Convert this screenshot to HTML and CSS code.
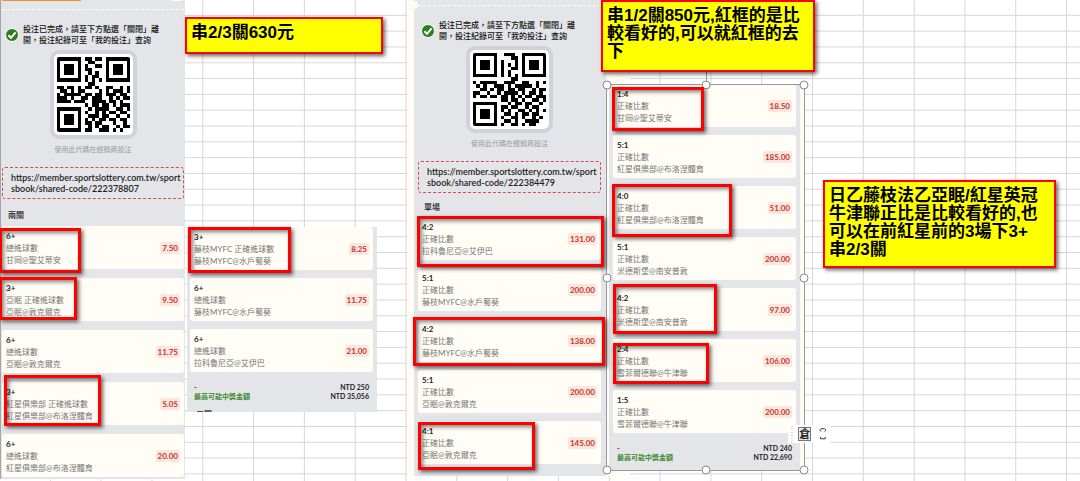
FILE: index.html
```html
<!DOCTYPE html>
<html lang="zh-TW">
<head>
  <meta charset="utf-8">
  <title>串關</title>
  <link rel="stylesheet" href="styles.css">
</head>
<body>
  <main class="sheet">

    <section class="slip slip-a">
      <div class="slip-top"><span class="tab-line"></span><span class="dot"></span></div>
      <div class="notice">
        <svg class="check" viewBox="0 0 14 14"><circle cx="7" cy="7" r="6.5" fill="#2f7d22" stroke="#fff" /><path d="M3.4 7.2 L6 9.8 L10.6 4.4" fill="none" stroke="#fff" stroke-width="2" /></svg>
        <p>投注已完成，請至下方點選「關閉」離<br>開，投注紀錄可至「我的投注」查詢</p>
      </div>
      <svg class="qr" id="qrA" viewBox="0 0 21 21" preserveAspectRatio="none" shape-rendering="crispEdges"></svg>
      <p class="caption">使用此代碼在經銷商投注</p>
      <a class="link-box" href="https://member.sportslottery.com.tw/sportsbook/shared-code/222378807">https://member.sportslottery.com.tw/sport<br>sbook/shared-code/222378807</a>
      <h2 class="play">兩關</h2>
      <div class="bets">
        <article class="bet"><div><h3>6+</h3><p>總進球數</p><p>甘岡@聖艾蒂安</p></div><span class="odds">7.50</span></article>
        <article class="bet"><div><h3>3+</h3><p>亞眠 正確進球數</p><p>亞眠@敦克爾克</p></div><span class="odds">9.50</span></article>
        <article class="bet"><div><h3>6+</h3><p>總進球數</p><p>亞眠@敦克爾克</p></div><span class="odds">11.75</span></article>
        <article class="bet"><div><h3>3+</h3><p>紅星俱樂部 正確進球數</p><p>紅星俱樂部@布洛涅體育</p></div><span class="odds">5.05</span></article>
        <article class="bet"><div><h3>6+</h3><p>總進球數</p><p>紅星俱樂部@布洛涅體育</p></div><span class="odds">20.00</span></article>
      </div>
    </section>

    <section class="slip slip-b">
      <div class="bets">
        <article class="bet"><div><h3>3+</h3><p>藤枝MYFC 正確進球數</p><p>藤枝MYFC@水戶蜀葵</p></div><span class="odds">8.25</span></article>
        <article class="bet"><div><h3>6+</h3><p>總進球數</p><p>藤枝MYFC@水戶蜀葵</p></div><span class="odds">11.75</span></article>
        <article class="bet"><div><h3>6+</h3><p>總進球數</p><p>拉科魯尼亞@艾伊巴</p></div><span class="odds">21.00</span></article>
      </div>
      <div class="totals">
        <p><span>-</span><span>NTD 250</span></p>
        <p><span class="win">最高可能中獎金額</span><span>NTD 35,056</span></p>
      </div>
      <h2 class="play">三關</h2>
    </section>

    <section class="slip slip-c">
      <div class="slip-top"></div>
      <div class="notice">
        <svg class="check" viewBox="0 0 14 14"><circle cx="7" cy="7" r="6.5" fill="#2f7d22" stroke="#fff" /><path d="M3.4 7.2 L6 9.8 L10.6 4.4" fill="none" stroke="#fff" stroke-width="2" /></svg>
        <p>投注已完成，請至下方點選「關閉」離<br>開，投注紀錄可至「我的投注」查詢</p>
      </div>
      <svg class="qr" id="qrC" viewBox="0 0 21 21" preserveAspectRatio="none" shape-rendering="crispEdges"></svg>
      <p class="caption">使用此代碼在經銷商投注</p>
      <a class="link-box" href="https://member.sportslottery.com.tw/sportsbook/shared-code/222384479">https://member.sportslottery.com.tw/sport<br>sbook/shared-code/222384479</a>
      <h2 class="play">單場</h2>
      <div class="bets">
        <article class="bet"><div><h3>4:2</h3><p>正確比數</p><p>拉科魯尼亞@艾伊巴</p></div><span class="odds">131.00</span></article>
        <article class="bet"><div><h3>5:1</h3><p>正確比數</p><p>藤枝MYFC@水戶蜀葵</p></div><span class="odds">200.00</span></article>
        <article class="bet"><div><h3>4:2</h3><p>正確比數</p><p>藤枝MYFC@水戶蜀葵</p></div><span class="odds">138.00</span></article>
        <article class="bet"><div><h3>5:1</h3><p>正確比數</p><p>亞眠@敦克爾克</p></div><span class="odds">200.00</span></article>
        <article class="bet"><div><h3>4:1</h3><p>正確比數</p><p>亞眠@敦克爾克</p></div><span class="odds">145.00</span></article>
      </div>
    </section>

    <section class="slip slip-d">
      <div class="bets">
        <article class="bet"><div><h3>1:4</h3><p>正確比數</p><p>甘岡@聖艾蒂安</p></div><span class="odds">18.50</span></article>
        <article class="bet"><div><h3>5:1</h3><p>正確比數</p><p>紅星俱樂部@布洛涅體育</p></div><span class="odds">185.00</span></article>
        <article class="bet"><div><h3>4:0</h3><p>正確比數</p><p>紅星俱樂部@布洛涅體育</p></div><span class="odds">51.00</span></article>
        <article class="bet"><div><h3>5:1</h3><p>正確比數</p><p>米德斯堡@南安普敦</p></div><span class="odds">200.00</span></article>
        <article class="bet"><div><h3>4:2</h3><p>正確比數</p><p>米德斯堡@南安普敦</p></div><span class="odds">97.00</span></article>
        <article class="bet"><div><h3>2:4</h3><p>正確比數</p><p>雪菲爾德聯@牛津聯</p></div><span class="odds">106.00</span></article>
        <article class="bet"><div><h3>1:5</h3><p>正確比數</p><p>雪菲爾德聯@牛津聯</p></div><span class="odds">200.00</span></article>
      </div>
      <div class="totals">
        <p><span>-</span><span>NTD 240</span></p>
        <p><span class="win">最高可能中獎金額</span><span>NTD 22,690</span></p>
      </div>
    </section>

    <div class="selection">
      <i class="stem"></i>
      <i class="handle nw"></i><i class="handle n"></i><i class="handle ne"></i>
      <i class="handle w"></i><i class="handle e"></i>
      <i class="handle sw"></i><i class="handle s"></i><i class="handle se"></i>
    </div>

    <div class="mark mark-a1"></div>
    <div class="mark mark-a2"></div>
    <div class="mark mark-a3"></div>
    <div class="mark mark-b1"></div>
    <div class="mark mark-c1"></div>
    <div class="mark mark-c2"></div>
    <div class="mark mark-c3"></div>
    <div class="mark mark-d1"></div>
    <div class="mark mark-d2"></div>
    <div class="mark mark-d3"></div>
    <div class="mark mark-d4"></div>

    <div class="note note-1">串2/3關630元</div>
    <div class="note note-2">串1/2關850元,紅框的是比<br>較看好的,可以就紅框的去<br>下</div>
    <div class="note note-3">日乙藤枝法乙亞眠/紅星英冠<br>牛津聯正比是比較看好的,也<br>可以在前紅星前的3場下3+<br>串2/3關</div>

    <div class="ime">
      <svg class="grip" viewBox="0 0 2 16"><path d="M1 0V16" stroke="#999" stroke-dasharray="1 2" /></svg>
      <span class="ime-key">倉</span>
      <svg class="ime-width" viewBox="0 0 8 14"><path d="M1 3V2.5L2 1.5H6L7 2.5V3L6 4.5M1 3L2 4.5M1.5 10V12H6.5V10" fill="none" stroke="#333" /></svg>
    </div>
  </main>
  <script src="qr.js"></script>
</body>
</html>
```
FILE: styles.css
```css
* {
  box-sizing: border-box;
}

body {
  margin: 0;
  font-family: Lato, "Noto Sans CJK TC", sans-serif;
  color: #222;
}

h2, h3, p {
  margin: 0;
  font-size: inherit;
}

/* spreadsheet canvas */
.sheet {
  position: relative;
  min-height: 100vh;
  overflow: hidden;
  background-color: #fff;
  background-image:
    linear-gradient(to left, #d6d6d6 1px, transparent 1px),
    linear-gradient(to top, #d6d6d6 1px, transparent 1px);
  background-size: calc(100% * 4 / 85) calc(100% * 10 / 304);
}

/* pasted betting slips */
.slip {
  position: absolute;
  overflow: hidden;
  background: #e4e5e8;
  font-size: 8px;
  line-height: 12px;
}

.slip-a {
  left: 0;
  top: 0;
  width: 185px;
  height: 479px;
  padding: 0 1px;
  border-left: 1px solid #a5a5a5;
}

.slip-b {
  left: 187px;
  top: 227px;
  width: 190px;
  height: 185px;
  padding: 0 4px 0 3px;
}

.slip-c {
  left: 407px;
  top: 0;
  width: 223px;
  height: 476px;
  padding: 0 5px 0 4px;
  border-left: 7px solid #fffdf3;
  border-right: 24px solid #fffdf3;
}

.slip-d {
  left: 606px;
  top: 84px;
  width: 199px;
  height: 387px;
  padding: 0 4px;
  border-left: 3px solid #fffdf3;
  border-right: 5px solid #fffdf3;
}

.slip-top {
  display: flex;
  justify-content: space-between;
  height: 10px;
  margin-bottom: 14px;
  border-bottom: 1px dashed #fffdf3;
}

.slip-c .slip-top {
  height: 6px;
}

/* punched notch at the end of the tear line */
.slip-c::before {
  content: "";
  position: absolute;
  left: -4px;
  top: 1px;
  width: 8px;
  height: 8px;
  border-radius: 50%;
  background: #fffdf3;
}

.tab-line {
  width: 79px;
  height: 1px;
  background: #f08a3c;
}

.dot {
  width: 10px;
  height: 1px;
  margin-right: 2px;
  background: #fff;
}

.notice {
  display: flex;
  align-items: center;
  gap: 4px;
  padding-left: 3px;
  color: #111;
  font-weight: 500;
  line-height: 11px;
}

.check {
  width: 14px;
  height: 14px;
}

.qr {
  display: block;
  width: 87px;
  height: 89px;
  margin: 4px auto;
  padding: 3px;
  border: 4px solid #d0d1da;
  border-radius: 9px;
  background: #fff;
}

.slip-c .qr {
  height: 87px;
}

.caption {
  color: #999;
  font-size: 7px;
  text-align: center;
}

.link-box {
  display: block;
  margin: 12px 0 8px;
  padding: 4px 8px;
  border: 1px dashed #e0454a;
  border-radius: 3px;
  color: #222;
  font-size: 9px;
  font-weight: 600;
  line-height: 11px;
  text-decoration: none;
  white-space: nowrap;
}

.play {
  padding-left: 6px;
  margin-bottom: 4px;
  font-weight: 500;
}

.bets {
  display: grid;
  gap: 8px;
}

.slip-a .play {
  margin-top: 10px;
  margin-bottom: 5px;
}

.slip-a .bets {
  gap: 9px;
}

.bet {
  display: flex;
  justify-content: space-between;
  align-items: center;
  height: 43px;
  padding: 0 4px;
  border-radius: 3px;
  background: #fffdf5;
}

.bet h3 {
  color: #222;
  font-weight: 700;
}

.bet p {
  color: #777;
}

.odds {
  padding: 0 2px;
  border-radius: 2px;
  background: #fbe6df;
  color: #c5382c;
  font-weight: 700;
}

.totals {
  padding: 11px 4px 0;
  font-size: 7px;
  font-weight: 700;
  line-height: 9px;
}

.totals p {
  display: flex;
  justify-content: space-between;
}

.totals .win {
  color: #3f8a34;
}

.totals + .play {
  padding-top: 7px;
}

/* frame round the selected picture */
.selection {
  position: absolute;
  left: 606px;
  top: 84px;
  width: 199px;
  height: 387px;
  border: 1px solid #999;
}

.stem {
  position: absolute;
  left: 50%;
  top: -13px;
  height: 12px;
  border-left: 1px solid #999;
}

.handle {
  position: absolute;
  width: 9px;
  height: 9px;
  border: 1px solid #8a8a8a;
  border-radius: 50%;
  background: #fff;
  transform: translate(-50%, -50%);
}

.nw { left: 0; top: 0; }
.n { left: 50%; top: 0; }
.ne { left: 100%; top: 0; }
.w { left: 0; top: 50%; }
.e { left: 100%; top: 50%; }
.sw { left: 0; top: 100%; }
.s { left: 50%; top: 100%; }
.se { left: 100%; top: 100%; }

/* red frames */
.mark {
  position: absolute;
  border: 3px solid #f00;
  box-shadow: 2px 2px 4px rgba(0, 0, 0, 0.6), inset 2px 2px 4px rgba(0, 0, 0, 0.5);
}

.mark-a1 { left: -1px; top: 228px; width: 82px; height: 45px; }
.mark-a2 { left: -1px; top: 277px; width: 78px; height: 43px; }
.mark-a3 { left: 4px; top: 375px; width: 97px; height: 51px; }
.mark-b1 { left: 188px; top: 227px; width: 103px; height: 46px; }
.mark-c1 { left: 417px; top: 216px; width: 187px; height: 51px; }
.mark-c2 { left: 413px; top: 317px; width: 192px; height: 49px; }
.mark-c3 { left: 418px; top: 422px; width: 117px; height: 48px; }
.mark-d1 { left: 612px; top: 87px; width: 92px; height: 44px; }
.mark-d2 { left: 612px; top: 184px; width: 120px; height: 53px; }
.mark-d3 { left: 613px; top: 284px; width: 104px; height: 50px; }
.mark-d4 { left: 613px; top: 343px; width: 96px; height: 41px; }

/* yellow notes */
.note {
  position: absolute;
  padding: 5px 4px;
  border: 2px solid #f00;
  background: #ff0;
  box-shadow: 2px 2px 4px rgba(0, 0, 0, 0.6);
  color: #000;
  font-family: "Liberation Sans", "Noto Sans CJK TC", sans-serif;
  font-size: 17px;
  font-weight: 700;
  line-height: 18px;
  white-space: nowrap;
}

.note-1 { left: 185px; top: 17px; width: 198px; height: 37px; }
.note-2 { left: 601px; top: 0; width: 214px; height: 72px; }
.note-3 { left: 823px; top: 180px; width: 233px; height: 88px; }

/* input method bar */
.ime {
  position: absolute;
  left: 788px;
  top: 425px;
  display: flex;
  align-items: center;
  width: 42px;
  height: 18px;
  padding: 0 3px;
  background: #fff;
}

.grip {
  width: 2px;
  height: 16px;
}

.ime-key {
  width: 14px;
  height: 14px;
  margin: 0 8px 0 5px;
  border: 1px solid #777;
  background: #eee;
  font-size: 11px;
  font-weight: 700;
  line-height: 11px;
  text-align: center;
}

.ime-width {
  width: 8px;
  height: 14px;
}
```
FILE: qr.js
```javascript
var codes = {
  qrA: [
    "#######.##.##.#######",
    "#.....#..##...#.....#",
    "#.###.#.#..##.#.###.#",
    "#.###.#.##....#.###.#",
    "#.###.#..#.#..#.###.#",
    "#.....#.#.##..#.....#",
    "#######.#.#.#.#######",
    ".........##..........",
    "##.##.#.##.#..##..#.#",
    ".##.#.##....#.#.###.#",
    "#.#####.##.##.###.##.",
    "###.#..##.###..#.#.##",
    "####.###..####.##.#..",
    "........#.##.##.#.###",
    "#######..#.####..##.#",
    "#.....#.#..#.#.##.##.",
    "#.###.#..###.##..#..#",
    "#.###.#.#.#.##.##.##.",
    "#.###.#.##.##...#..#.",
    "#.....#..#.#.##..#.##",
    "#######.##..###.#.#.."
  ],
  qrC: [
    "#######..###..#######",
    "#.....#....##.#.....#",
    "#.###.#.#...#.#.###.#",
    "#.###.#.#.#.#.#.###.#",
    "#.###.#.#..##.#.###.#",
    "#.....#.#.#...#.....#",
    "#######.#.#.#.#######",
    "...........##........",
    "#.#####..###..##..#.#",
    ".#.#..###.#.#####.#..",
    "..##.#.##.##.##..#.##",
    "##..#..#.####.#.##.#.",
    "#.##.##.##.#.#.##.###",
    "........##.##.#..##.#",
    "#######...#.##.##..#.",
    "#.....#.##.##..#.##..",
    "#.###.#.#.#..##.#.#.#",
    "#.###.#..##.#.##.##..",
    "#.###.#.#..##.#..#.#.",
    "#.....#..##.#..####..",
    "#######.#..##.#.##..."
  ]
};

for (var id in codes) {
  var d = "";
  codes[id].forEach(function (row, y) {
    for (var x = 0; x < row.length; x++) {
      if (row[x] === "#") d += "M" + x + " " + y + "h1v1h-1z";
    }
  });
  var path = document.createElementNS("http://www.w3.org/2000/svg", "path");
  path.setAttribute("d", d);
  document.getElementById(id).appendChild(path);
}
```
